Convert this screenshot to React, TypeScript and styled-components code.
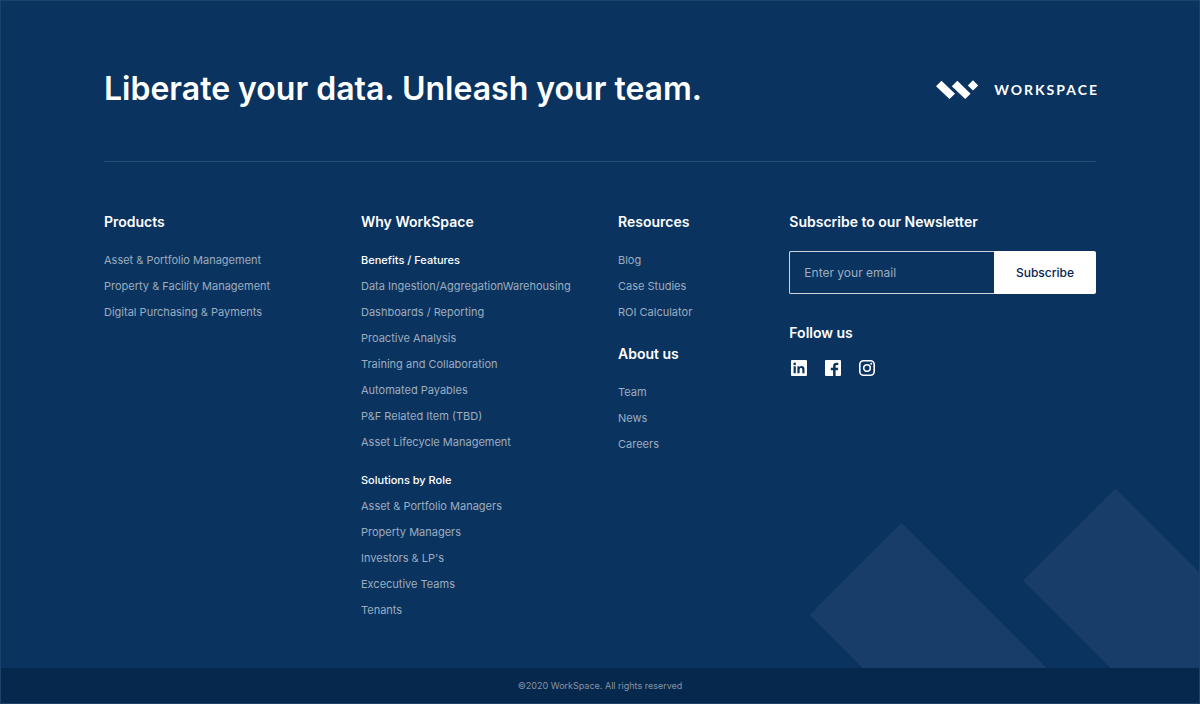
import React from "react";
import styled, { createGlobalStyle, css } from "styled-components";

const GlobalStyle = createGlobalStyle`
  *, *::before, *::after { box-sizing: border-box; }
  body {
    margin: 0;
    background: #0a335f;
    font-family: Inter, "Liberation Sans", sans-serif;
    -webkit-font-smoothing: antialiased;
  }
`;

const Footer = styled.footer`
  min-height: 100vh;
  display: flex;
  flex-direction: column;
  border: 1px solid #1b4269;
  background: #0a335f;
  color: #fff;
`;

const Main = styled.div`
  position: relative;
  flex: 1;
  overflow: hidden;
  padding: 60px 103px 44px;
`;

const Backdrop = styled.svg`
  position: absolute;
  right: 0;
  bottom: 0;
  width: 390px;
  height: 180px;
`;

const Content = styled.div`
  position: relative;
`;

const Hero = styled.div`
  display: flex;
  align-items: center;
  justify-content: space-between;
  gap: 24px;
  padding-bottom: 44px;
  border-bottom: 1px solid #2a4d76;
`;

const Headline = styled.h1`
  margin: 0;
  font-size: 32px;
  line-height: 56px;
  font-weight: 600;
`;

const Brand = styled.a`
  display: flex;
  align-items: center;
  gap: 15px;
  margin-right: -3px;
  color: inherit;
  text-decoration: none;
  font-family: Lato, "Liberation Sans", sans-serif;
  font-size: 14px;
  font-weight: 700;
  letter-spacing: 2px;
`;

const Columns = styled.div`
  display: grid;
  grid-template-columns: repeat(12, 1fr);
  column-gap: 36px;
  padding-top: 48px;
`;

const Column = styled.div<{ $span: number }>`
  grid-column: span ${(p) => p.$span};
  min-width: 0;
`;

const titleText = css`
  margin: 0 0 13px;
  font-size: 14px;
  line-height: 24px;
  font-weight: 600;
`;

const Title = styled.h2`
  ${titleText}
`;

const FieldLabel = styled.label`
  display: block;
  ${titleText}
`;

const Subtitle = styled.h3`
  margin: 0;
  font-size: 11px;
  line-height: 26px;
  font-weight: 500;
`;

const LinkList = styled.ul<{ $gap?: number }>`
  list-style: none;
  margin: 0 0 ${(p) => p.$gap ?? 0}px;
  padding: 0;
`;

const LinkItem = styled.li`
  font-size: 11px;
  line-height: 26px;
  white-space: nowrap;
`;

const FooterLink = styled.a`
  color: #9dadbf;
  text-decoration: none;
  &:hover { color: #fff; }
`;

const Form = styled.form`
  display: flex;
  height: 43px;
  margin: 17px 0 27px;
`;

const EmailInput = styled.input`
  flex: 1;
  min-width: 0;
  padding: 0 14px;
  border: 1px solid #ccd6e1;
  border-right: 0;
  border-radius: 2px 0 0 2px;
  outline: 0;
  background: transparent;
  color: #fff;
  font: 400 12px Inter, "Liberation Sans", sans-serif;
  &::placeholder { color: #9dadbf; opacity: 1; }
`;

const SubscribeButton = styled.button`
  width: 102px;
  padding: 0;
  border: 0;
  border-radius: 0 2px 2px 0;
  background: #fff;
  color: #062355;
  font: 500 12px Inter, "Liberation Sans", sans-serif;
  cursor: pointer;
`;

const Social = styled.div`
  display: flex;
  gap: 18px;
  padding: 2px;
`;

const SocialLink = styled.a`
  display: flex;
  color: #fff;
`;

const Legal = styled.div`
  background: #07284d;
  color: #8594a6;
  text-align: center;
  font-size: 9px;
  line-height: 35px;
`;

function SocialIcon({ label, children }: { label: string; children: React.ReactNode }) {
  return (
    <SocialLink href="#" aria-label={label}>
      <svg width="16" height="16" viewBox="0 0 16 16" fill="currentColor" aria-hidden="true">
        {children}
      </svg>
    </SocialLink>
  );
}

function Links({ items, gap }: { items: string[]; gap?: number }) {
  return (
    <LinkList $gap={gap}>
      {items.map((item) => (
        <LinkItem key={item}>
          <FooterLink href="#">{item}</FooterLink>
        </LinkItem>
      ))}
    </LinkList>
  );
}

const products = ["Asset & Portfolio Management", "Property & Facility Management", "Digital Purchasing & Payments"];
const features = [
  "Data Ingestion/AggregationWarehousing",
  "Dashboards / Reporting",
  "Proactive Analysis",
  "Training and Collaboration",
  "Automated Payables",
  "P&F Related Item (TBD)",
  "Asset Lifecycle Management",
];
const roles = ["Asset & Portfolio Managers", "Property Managers", "Investors & LP's", "Excecutive Teams", "Tenants"];

export default function App() {
  return (
    <>
      <GlobalStyle />
      <Footer>
        <Main>
          <Backdrop viewBox="0 0 390 180" fill="#193d69" aria-hidden="true">
            <path d="M0.5 127L92.5 35L237.5 180H53.5Z" />
            <path d="M214 92.5L306.5 0.5L390 84V180H301.5Z" />
          </Backdrop>
          <Content>
            <Hero>
              <Headline>Liberate your data. Unleash your team.</Headline>
              <Brand href="#">
                <svg width="43" height="20" viewBox="0 0 43 20" fill="currentColor" aria-hidden="true">
                  <path d="M0 7.2L5.5 1.7L19 14.7L13.5 20Z" />
                  <path d="M15.8 7.2L21.3 1.7L34.6 14.7L29.2 20Z" />
                  <path d="M37 1.2L42.2 6.4L37 11.6L31.8 6.4Z" />
                </svg>
                WORKSPACE
              </Brand>
            </Hero>
            <Columns>
              <Column $span={3}>
                <Title>Products</Title>
                <Links items={products} />
              </Column>
              <Column $span={3}>
                <Title>Why WorkSpace</Title>
                <Subtitle>Benefits / Features</Subtitle>
                <Links items={features} gap={12} />
                <Subtitle>Solutions by Role</Subtitle>
                <Links items={roles} />
              </Column>
              <Column $span={2}>
                <Title>Resources</Title>
                <Links items={["Blog", "Case Studies", "ROI Calculator"]} gap={17} />
                <Title>About us</Title>
                <Links items={["Team", "News", "Careers"]} />
              </Column>
              <Column $span={4}>
                <FieldLabel htmlFor="email">Subscribe to our Newsletter</FieldLabel>
                <Form onSubmit={(e) => e.preventDefault()}>
                  <EmailInput id="email" type="email" placeholder="Enter your email" />
                  <SubscribeButton type="submit">Subscribe</SubscribeButton>
                </Form>
                <Title>Follow us</Title>
                <Social>
                  <SocialIcon label="LinkedIn">
                    <path
                      fillRule="evenodd"
                      d="M1 0H15A1 1 0 0 1 16 1V15A1 1 0 0 1 15 16H1A1 1 0 0 1 0 15V1A1 1 0 0 1 1 0ZM2.6 6.2V13.3H4.8V6.2ZM3.7 2.6A1.3 1.3 0 1 0 3.7 5.2A1.3 1.3 0 1 0 3.7 2.6ZM6.4 6.2V13.3H8.6V9.6C8.6 8.5 9.1 7.9 10 7.9C10.9 7.9 11.3 8.5 11.3 9.6V13.3H13.5V9.2C13.5 7.1 12.4 6 10.8 6C9.8 6 9 6.4 8.5 7.2V6.2Z"
                    />
                  </SocialIcon>
                  <SocialIcon label="Facebook">
                    <path d="M1 0H15A1 1 0 0 1 16 1V15A1 1 0 0 1 15 16H10.6V10.2H12.8L13.2 7.8H10.6V6.4C10.6 5.5 11 5.1 11.9 5.1H13.3V2.9C12.8 2.8 12.2 2.7 11.5 2.7C9.4 2.7 8.1 3.9 8.1 6.1V7.8H5.8V10.2H8.1V16H1A1 1 0 0 1 0 15V1A1 1 0 0 1 1 0Z" />
                  </SocialIcon>
                  <SocialIcon label="Instagram">
                    <rect x="0.8" y="0.8" width="14.4" height="14.4" rx="3.8" fill="none" stroke="currentColor" strokeWidth="1.6" />
                    <circle cx="8" cy="8" r="3.3" fill="none" stroke="currentColor" strokeWidth="1.6" />
                    <circle cx="12.2" cy="3.8" r="1" />
                  </SocialIcon>
                </Social>
              </Column>
            </Columns>
          </Content>
        </Main>
        <Legal>©2020 WorkSpace. All rights reserved</Legal>
      </Footer>
    </>
  );
}
